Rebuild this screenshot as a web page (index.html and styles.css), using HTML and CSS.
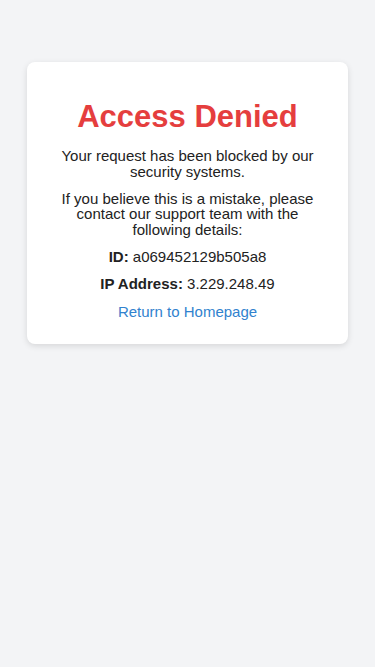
FILE: index.html
```html
<!DOCTYPE html>
<html lang="en">
<head>
<meta charset="utf-8">
<meta name="viewport" content="width=device-width, initial-scale=1">
<title>Access Denied</title>
<link rel="stylesheet" href="styles.css">
</head>
<body>
<main class="card">
  <h1 class="title">Access Denied</h1>
  <p class="text">Your request has been blocked by our security systems.</p>
  <p class="text">If you believe this is a mistake, please contact our support team with the following details:</p>
  <p class="text"><strong>ID:</strong> a069452129b505a8</p>
  <p class="text"><strong>IP Address:</strong> 3.229.248.49</p>
  <a class="link" href="#">Return to Homepage</a>
</main>
</body>
</html>
```
FILE: styles.css
```css
html, body {
  margin: 0;
  padding: 0;
  background: #f3f4f6;
  font-family: "Liberation Sans", Arial, Helvetica, sans-serif;
  color: #222;
}
body {
  padding: 62px 27px;
}
.card {
  background: #fff;
  border-radius: 8px;
  box-shadow: 0 2px 6px rgba(0,0,0,0.12);
  padding: 38px 20px 25px;
  text-align: center;
  display: flex;
  flex-direction: column;
  align-items: center;
}
.title {
  color: #e53e3e;
  font-size: 31px;
  font-weight: bold;
  margin: 0 0 14px;
  line-height: 34px;
}
.text {
  font-size: 15px;
  line-height: 15.5px;
  margin: 0 0 11.75px;
}
.link {
  color: #3182ce;
  text-decoration: none;
  font-size: 15px;
  line-height: 15.5px;
}
```
